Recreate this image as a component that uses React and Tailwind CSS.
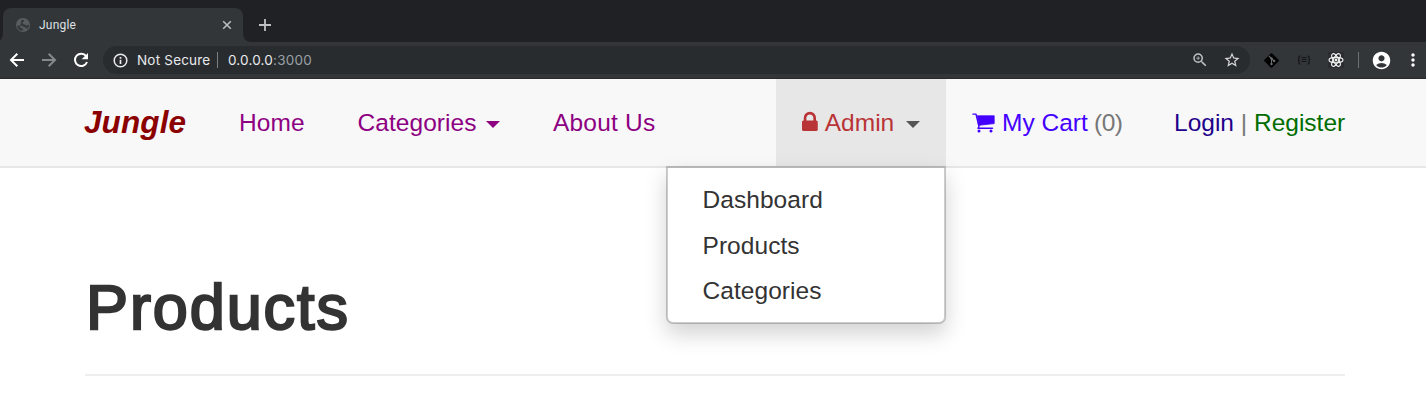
import React from "react";
import { MdZoomIn, MdStarBorder, MdAccountCircle, MdMoreVert } from "react-icons/md";

function StrokeIcon({ className, d, width = 2 }) {
  return (
    <svg className={className} viewBox="0 0 20 20" fill="none" stroke="currentColor" strokeWidth={width}>
      <path d={d} />
    </svg>
  );
}

function GlobeIcon() {
  return (
    <svg className="size-[14px]" viewBox="0 0 14 14">
      <circle cx="7" cy="7" r="7" fill="#5a5d60" />
      <path d="M5.200 2.200Q7.500 1 8.300 2.600 8 4 6.400 4.300q-.3 1.700 1.700 1.800.8 1.300 2.600 1.100L13 6.400q.3 3-1.800 4.600-1.400-.3-1.600-1.600-2.300.3-3.100-1.300L1 7.400q.2 3.800 3.200 5.200l3.500-.2-1.600-2.300-2-.9" fill="#363a3d" />
    </svg>
  );
}

function BrowserTabs() {
  return (
    <div className="flex h-[42px] items-end bg-[#202124]">
      <svg className="h-[8px] w-[3px]" viewBox="5 0 3 8"><path d="M8 0v8H0a8 8 0 0 0 8-8z" fill="#323639" /></svg>
      <div className="flex h-[34px] w-[240px] items-center rounded-t-[8px] bg-[#323639] pl-[13px] pr-[6px]">
        <GlobeIcon />
        <span className="ml-[9px] flex-1 text-[12px] leading-none tracking-[0.2px] text-[#dfe1e5]">Jungle</span>
        <StrokeIcon className="size-[20px] text-[#bdc1c6]" width={1.5} d="M6.200 6.200l7.600 7.600M13.800 6.200l-7.600 7.600" />
      </div>
      <svg className="h-[8px] w-[8px]" viewBox="0 0 8 8"><path d="M0 0v8h8a8 8 0 0 1-8-8z" fill="#323639" /></svg>
      <div className="flex h-[34px] items-center pl-[4px]">
        <StrokeIcon className="size-[20px] text-[#bdc1c6]" width={1.800} d="M10 4v12M4 10h12" />
      </div>
    </div>
  );
}

function GitIcon() {
  return (
    <svg className="size-[17px]" viewBox="0 0 17 17">
      <rect x="3" y="3" width="11" height="11" rx="1" transform="rotate(45 8.500 8.500)" fill="#000" />
      <path d="M5.800 3.800l2.700 2.700v5.500M8.500 6.500l2.500 2.500" fill="none" stroke="#6b6e70" strokeWidth="1.100" />
      <circle cx="8.500" cy="6.500" r="1.200" fill="#6b6e70" />
      <circle cx="8.500" cy="12" r="1.200" fill="#6b6e70" />
      <circle cx="11.200" cy="9" r="1.200" fill="#6b6e70" />
    </svg>
  );
}

function BracesIcon() {
  return (
    <svg className="h-[10px] w-[14px]" viewBox="0 0 14 10" fill="none" stroke="#121416" strokeWidth="1.200">
      <path d="M3.300 1H3q-1 0-1 1v1.500Q2 5 .8 5 2 5 2 6.500V8q0 1 1 1h.3M10.700 1h.3q1 0 1 1v1.500Q12 5 13.200 5 12 5 12 6.500V8q0 1-1 1h-.3M4.500 2.500h5M4.500 4.500h5M4.500 6.500h5" />
    </svg>
  );
}

function ReactIcon() {
  return (
    <svg className="size-[16px] bg-[#2a2d30]" viewBox="0 0 16 16" fill="none" stroke="#f0f0f0" strokeWidth="1.150">
      <ellipse cx="8" cy="8" rx="7" ry="2.700" />
      <ellipse cx="8" cy="8" rx="7" ry="2.700" transform="rotate(60 8 8)" />
      <ellipse cx="8" cy="8" rx="7" ry="2.700" transform="rotate(120 8 8)" />
      <circle cx="8" cy="8" r="1.400" fill="#f0f0f0" stroke="none" />
    </svg>
  );
}

function RefreshIcon() {
  return (
    <svg className="ml-[12px] size-[20px] text-white" viewBox="0 0 20 20" fill="none">
      <path d="M15.200 6.200A6.200 6.200 0 1 0 16 12" stroke="currentColor" strokeWidth="2" />
      <path d="M17 3v6.300h-6.300z" fill="currentColor" />
    </svg>
  );
}

function InfoIcon() {
  return (
    <svg className="size-[17px] text-[#e8eaed]" viewBox="0 0 17 17" fill="none" stroke="currentColor">
      <circle cx="8.500" cy="8.500" r="6.300" strokeWidth="1.500" />
      <path d="M8.500 7.700v4.300M8.500 5v1.700" strokeWidth="1.700" />
    </svg>
  );
}

function Toolbar() {
  return (
    <div className="flex h-[37px] items-center border-b border-[#27292b] bg-[#323639]">
      <StrokeIcon className="ml-[7px] size-[20px] text-white" d="M17 10H4.500M10.300 3.700L4 10l6.300 6.300" />
      <StrokeIcon className="ml-[12px] size-[20px] text-[#86898c]" d="M3 10h12.500M9.700 3.700L16 10l-6.300 6.300" />
      <RefreshIcon />
      <div className="ml-[12px] flex h-[28px] w-[1147px] items-center rounded-full bg-[#282c2f] pl-[9px] pr-[9px] font-[Inter,sans-serif] text-[13.500px] leading-none">
        <InfoIcon />
        <span className="ml-[8px] w-[74px] whitespace-nowrap pt-[2px] tracking-[0.2px] text-[#e8eaed]">Not Secure</span>
        <span className="ml-[6px] h-[16px] w-px bg-[#7d8083]" />
        <span className="ml-[10px] flex-1 pt-[2px] tracking-[0.2px] text-[#e8eaed]">0.0.0.0<span className="text-[#9aa0a6]">:3000</span></span>
        <MdZoomIn className="size-[18px] text-[#bdc1c6]" />
        <MdStarBorder className="ml-[14px] size-[18px] text-[#d5d7da]" />
      </div>
      <div className="ml-[13px] flex"><GitIcon /></div>
      <div className="ml-[17px] flex"><BracesIcon /></div>
      <div className="ml-[17px] flex"><ReactIcon /></div>
      <span className="ml-[14px] h-[16px] w-px bg-[#6d7073]" />
      <MdAccountCircle className="ml-[12px] size-[21px] text-white" />
      <MdMoreVert className="ml-[11px] size-[20px] shrink-0 text-white" />
    </div>
  );
}

function Caret({ className }) {
  return <svg className={className} viewBox="0 0 14 7"><path d="M0 0h14L7 7z" fill="currentColor" /></svg>;
}

function LockIcon() {
  return (
    <svg className="mr-[7px] h-[24.500px] w-[15.750px]" viewBox="320 0 1152 1792" fill="currentColor">
      <path d="M640 768h512v-192q0-106-75-181t-181-75-181 75-75 181v192zm832 96v576q0 40-28 68t-68 28h-960q-40 0-68-28t-28-68v-576q0-40 28-68t68-28h32v-192q0-184 132-316t316-132 316 132 132 316v192h32q40 0 68 28t28 68z" />
    </svg>
  );
}

function CartIcon() {
  return (
    <svg className="mr-[7px] h-[20px] w-[23px]" viewBox="0 0 23 20" fill="none" stroke="currentColor" strokeLinecap="round" strokeLinejoin="round">
      <path d="M.9 1.100H4L7 13.500l-1 1.800H20.500" strokeWidth="1.400" />
      <path d="M5.200 2.800h17v7.800L7 12.300z" fill="currentColor" strokeWidth="0.800" />
      <circle cx="7" cy="18" r="1.500" fill="currentColor" stroke="none" />
      <circle cx="19" cy="18" r="1.500" fill="currentColor" stroke="none" />
    </svg>
  );
}

function AdminMenu() {
  return (
    <ul className="absolute right-0 top-full w-[280px] rounded-b-[7px] border-2 border-black/20 bg-white bg-clip-padding pb-[8px] pt-[9px] tracking-[0.05px] text-[#333] shadow-[0_10px_21px_rgba(0,0,0,0.175)]">
      {["Dashboard", "Products", "Categories"].map((label) => (
        <li key={label} className="flex h-[45.500px] items-center pl-[34.500px]">{label}</li>
      ))}
    </ul>
  );
}

function Navbar() {
  return (
    <nav className="flex h-[89px] items-stretch border-b-2 border-[#e7e7e7] bg-[#f8f8f8] pl-[85px] pr-[81px] text-[24.500px] leading-[35px] text-[#777]">
      <div className="-ml-px flex w-[128.500px] items-center text-[31.500px] font-bold italic tracking-[0.1px] text-[#8b0000]">Jungle</div>
      <div className="flex flex-1 items-center whitespace-nowrap tracking-[0.05px] text-[#8d0082]">
        <a className="w-[118.500px] pl-[26.500px]">Home</a>
        <a className="flex w-[195px] items-center pl-[26.500px]">Categories<Caret className="ml-[9.500px] mt-[4px] h-[7px] w-[14px]" /></a>
        <a className="pl-[27px] tracking-[0.200px]">About Us</a>
      </div>
      <div className="relative flex w-[170px] items-center bg-[#e7e7e7] pl-[26px] text-[#b93437]">
        <LockIcon />Admin<Caret className="ml-[11.500px] mt-[4px] h-[7px] w-[14px] text-[#555]" />
        <AdminMenu />
      </div>
      <div className="flex w-[202px] items-center whitespace-pre pl-[26px]">
        <span className="flex items-center text-[#4400ff]"><CartIcon />My Cart</span><span className="tracking-[-0.5px]"> (0)</span>
      </div>
      <div className="w-[197px] self-center whitespace-nowrap pl-[26px]">
        <span className="text-[#22008b]">Login</span> | <span className="text-[#006d00]">Register</span>
      </div>
    </nav>
  );
}

export default function App() {
  return (
    <div className="h-[412px] overflow-hidden bg-white">
      <header className="font-[Roboto,sans-serif]">
        <BrowserTabs />
        <Toolbar />
      </header>
      <div className="font-['Liberation_Sans',Arial,sans-serif]">
        <Navbar />
        <main className="pl-[85px] pr-[81px]">
          <div className="h-[208px] border-b-2 border-[#eee] pt-[104px]">
            <h1 className="pl-px text-[63px] font-normal leading-[70px] tracking-[1.900px] text-[#333] [-webkit-text-stroke:2.300px_#333]">Products</h1>
          </div>
        </main>
      </div>
    </div>
  );
}
